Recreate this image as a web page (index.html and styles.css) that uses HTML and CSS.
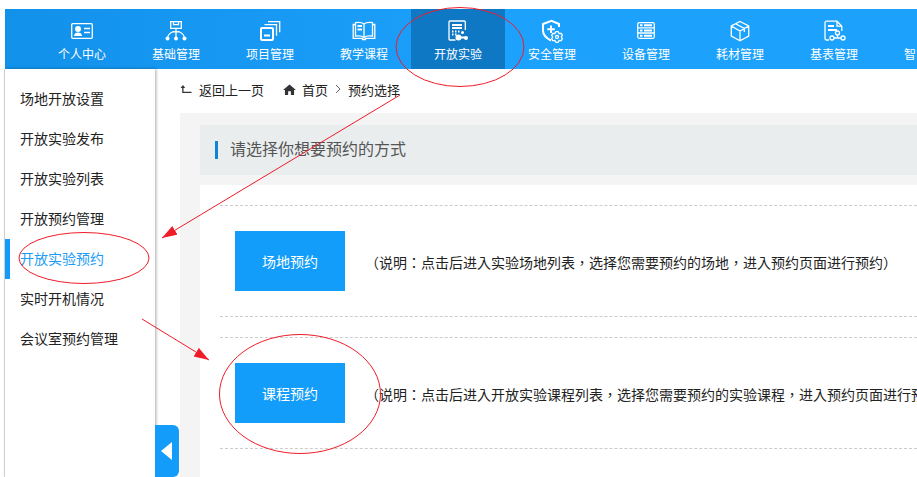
FILE: index.html
```html
<!DOCTYPE html>
<html lang="zh-CN">
<head>
<meta charset="utf-8">
<title>预约选择</title>
<link rel="stylesheet" href="styles.css">
</head>
<body>
<div class="page">
  <nav class="topnav">
    <a class="nav-item"><svg class="ico" viewBox="0 0 24 24"><rect x="1.700" y="4.700" width="20.600" height="14.600" rx="1"/><circle class="f" cx="8" cy="10" r="3"/><path class="f" d="M4 17c0-2.500 2-3.500 4-3.500s4 1 4 3.500z"/><path d="M14 9.500h6M14 13.500h6"/></svg><span>个人中心</span></a>
    <a class="nav-item"><svg class="ico" viewBox="0 0 24 24"><path d="M6.700 2.700h10.600v6.600H6.700zM9.500 2.700v3h5v-3M12 9.300v10M12 12.500c-5 0-8 3-8.500 6.500M12 12.500c5 0 8 3 8.500 6.500"/><circle class="f" cx="3.500" cy="19.500" r="2"/><circle class="f" cx="12" cy="19.500" r="2"/><circle class="f" cx="20.500" cy="19.500" r="2"/></svg><span>基础管理</span></a>
    <a class="nav-item"><svg class="ico" viewBox="0 0 24 24"><rect class="b" x="3" y="9" width="12" height="12" rx="1"/><path class="b" d="M6 16.500h6"/><path d="M6.500 5.700h12v11M10 2.700h11.700v10.600"/></svg><span>项目管理</span></a>
    <a class="nav-item"><svg class="ico" viewBox="0 0 24 24"><path d="M12 5C10.500 3.800 7 3.200 3.500 3.700v13.500c3.500-.5 7 0 8.500 1.300 1.500-1.300 5-1.800 8.500-1.300V3.700C17 3.200 13.500 3.800 12 5zM12 5v13.500M3.500 5.500H1.200v13.800h9.300v1.200h3v-1.200h9.300V5.500h-2.300"/><path class="b" d="M5.500 7h4.500M5.500 10.500h4.500"/></svg><span>教学课程</span></a>
    <a class="nav-item active"><svg class="ico" viewBox="0 0 24 24"><path d="M19.300 11V3a1 1 0 0 0-1-1H4a1 1 0 0 0-1 1v17a1 1 0 0 0 1 1h5.500"/><path class="b" d="M6 6h10M6 9h10"/><path class="b" d="M6 12.500h1.500M9 12.500h1.500M12 12.500h1.500M6 15.500h1.500M9 15.500h1.500"/><circle class="f" cx="12.500" cy="18.500" r="3"/><circle class="f" cx="20" cy="19" r="2"/><circle class="f" cx="16.500" cy="13.500" r="1.500"/><path class="b" d="M14 18.500h5"/></svg><span>开放实验</span></a>
    <a class="nav-item"><svg class="ico" viewBox="0 0 24 24"><path class="b" d="M19 8V5L11.500 1.800 3 5v6.500c0 4 3 7.500 8 10M11 6.500v7.500M7.300 10.200h7.500"/><path d="M18 12.700l1.200 1.800 2.100-.1 1 1.800-1 1.800 1 1.800-1 1.800-2.100-.1-1.200 1.800h-2l-1.200-1.800-2.100.1-1-1.800 1-1.800-1-1.800 1-1.800 2.100.1 1.200-1.800z"/><circle cx="17" cy="18" r="1.500"/></svg><span>安全管理</span></a>
    <a class="nav-item"><svg class="ico" viewBox="0 0 24 24"><rect x="3.700" y="3.700" width="16.600" height="15.600" rx="1.500"/><path d="M3.700 8.800h16.600M3.700 14h16.600"/><path class="b" d="M6 6.300h2.500M10 6.300h8M6 11.400h2.500M10 11.400h8M6 16.700h2.500M10 16.700h8"/></svg><span>设备管理</span></a>
    <a class="nav-item"><svg class="ico" viewBox="0 0 24 24"><path d="M12 2.500l8.700 4.500v10L12 21.800 3.300 17V7zM3.300 7L12 12l8.700-5M12 12v9.800M7.500 4.800l8.800 4.700v3.500"/></svg><span>耗材管理</span></a>
    <a class="nav-item"><svg class="ico" viewBox="0 0 24 24"><path d="M7 21H4.500A1.500 1.500 0 0 1 3 19.500V3.700A1.500 1.500 0 0 1 4.500 2.200h10.500l4.800 5V12M15 2.200V7.200h4.800"/><path class="b" d="M6 7h6M6 11h9"/><circle cx="10" cy="19" r="2"/><circle cx="21" cy="19" r="2"/><circle cx="15.500" cy="14" r="2"/><path d="M12 19h7M15.500 16v3"/></svg><span>基表管理</span></a>
    <a class="nav-item"><svg class="ico" viewBox="0 0 24 24"></svg><span>智能管理</span></a>
  </nav>
  <div class="body">
    <aside class="sidebar">
      <ul class="menu">
        <li>场地开放设置</li>
        <li>开放实验发布</li>
        <li>开放实验列表</li>
        <li>开放预约管理</li>
        <li class="current">开放实验预约</li>
        <li>实时开机情况</li>
        <li>会议室预约管理</li>
      </ul>
      <button class="collapse" aria-label="收起"><i></i></button>
    </aside>
    <main class="main">
      <div class="crumbs">
        <svg class="back" viewBox="0 0 12 10"><path d="M3 1L.5 4h1.700v5H11.500V7.800H3.500V4h1.700z"/></svg>
        <span class="back-text">返回上一页</span>
        <svg class="home" viewBox="0 0 14 12"><path d="M7 .5L0 6.500h2V12h3.500V8h3v4H12V6.500h2z"/></svg>
        <span>首页</span>
        <svg class="sep" viewBox="0 0 6 10"><path d="M1 1l4 4-4 4"/></svg>
        <span>预约选择</span>
      </div>
      <section class="panel">
        <h2 class="heading"><span>请选择你想要预约的方式</span></h2>
        <div class="card">
          <div class="row">
            <a class="btn">场地预约</a>
            <p lang="zh-TW">（说明：点击后进入实验场地列表，选择您需要预约的场地，进入预约页面进行预约）</p>
          </div>
          <div class="row">
            <a class="btn">课程预约</a>
            <p lang="zh-TW">（说明：点击后进入开放实验课程列表，选择您需要预约的实验课程，进入预约页面进行预约）</p>
          </div>
        </div>
      </section>
    </main>
  </div>
  <svg class="marks" viewBox="0 0 917 477">
    <defs><marker id="arrow" markerWidth="16" markerHeight="12" refX="15" refY="5" orient="auto" markerUnits="userSpaceOnUse"><path d="M0 0L15 5 0 10z" fill="#f01c28"/></marker></defs>
    <ellipse cx="460" cy="47" rx="64" ry="39.500"/>
    <ellipse cx="84" cy="258" rx="65" ry="25.500"/>
    <ellipse cx="300" cy="394" rx="80.500" ry="59.500"/>
    <path d="M400 95L162 238" marker-end="url(#arrow)"/>
    <path d="M142 319L209 360" marker-end="url(#arrow)"/>
  </svg>
</div>
</body>
</html>
```

FILE: styles.css
```css
* { box-sizing: border-box; }
html, body { margin: 0; height: 100%; overflow: hidden; background: #fff; }
body { font-family: "Noto Sans CJK SC", "Liberation Sans", sans-serif; color: #222; }
.page { position: relative; width: 917px; height: 477px; padding: 9px 0 0 5px; overflow: hidden; }
.page::before { content: ""; position: absolute; left: 4px; top: 69px; bottom: 0; width: 1px; background: #ddd; }

.topnav { display: flex; height: 60px; padding-left: 30px; background: linear-gradient(90deg, #1291ea, #1ca1fc 55%); }
.nav-item { flex: 0 0 94px; display: flex; flex-direction: column; align-items: center; padding-top: 10px; color: #fff; font-size: 12px; line-height: 18px; }
.nav-item span { margin-top: 2px; white-space: nowrap; }
.nav-item.active { background: #0f78c4; }
.ico { width: 24px; height: 24px; fill: none; stroke: #fff; stroke-width: 1.300; }
.ico .f { fill: #fff; stroke: none; }
.ico .b { stroke-width: 2; }

.body { display: flex; height: 408px; }
.sidebar { position: relative; flex: 0 0 150px; background: #fff; box-shadow: 1px 0 3px rgba(0,0,0,.35); z-index: 1; }
.menu { list-style: none; margin: 0; padding: 9px 0 0; font-size: 14px; }
.menu li { height: 40px; line-height: 40px; padding-left: 15px; }
.menu .current { color: #1c9cf5; box-shadow: inset 5px 0 0 #129bfb; margin-top: 1px; margin-bottom: -1px; line-height: 38px; }
.collapse { position: absolute; left: 150px; top: 356px; width: 24px; height: 52px; padding: 0; border: 0; border-radius: 0 6px 6px 0; background: #149cfb; display: flex; align-items: center; justify-content: center; }
.collapse i { display: block; width: 0; height: 0; border-style: solid; border-width: 9px 11px 9px 0; border-color: transparent #fff transparent transparent; margin-right: 1px; }

.main { flex: 1; min-width: 0; padding-left: 25px; }
.crumbs { display: flex; align-items: center; height: 40px; margin-bottom: 4px; font-size: 13px; color: #222; white-space: nowrap; }
.back { width: 12px; height: 10px; fill: #333; margin-right: 7px; }
.back-text { margin-right: 19px; }
.home { width: 13px; height: 11px; fill: #333; margin-right: 6px; }
.sep { width: 6px; height: 10px; fill: none; stroke: #666; margin: 0 7px 0 7px; }

.panel { margin-top: 0; padding: 12px 0 0 20px; height: 364px; background: #f4f4f4; }
.heading { margin: 0; height: 50px; display: flex; align-items: center; padding-left: 15px; background: #e9edee; font-size: 16px; font-weight: 400; color: #555; }
.heading span { border-left: 3px solid #0f85d5; padding-left: 13px; height: 18px; line-height: 15px; white-space: nowrap; text-indent: -1px; }
.card { margin-top: 10px; height: 292px; background: #fff; padding: 20px 0 0 20px; }
.row { display: flex; align-items: center; height: 112px; padding-left: 15px; border-top: 1px dashed #ccc; border-bottom: 1px dashed #ccc; margin-bottom: 20px; white-space: nowrap; }
.btn { flex: 0 0 110px; height: 60px; line-height: 60px; text-align: center; background: #139dfb; color: #fff; font-size: 14px; }
.row p { margin: 2px 0 0 20px; font-family: "Noto Sans CJK TC", "Noto Sans CJK SC", sans-serif; font-size: 14px; color: #222; text-spacing-trim: space-all; }

.marks { position: absolute; left: 0; top: 0; width: 917px; height: 477px; z-index: 2; pointer-events: none; fill: none; stroke: #f01c28; stroke-width: 1; }
.marks marker path { stroke: none; }
```
